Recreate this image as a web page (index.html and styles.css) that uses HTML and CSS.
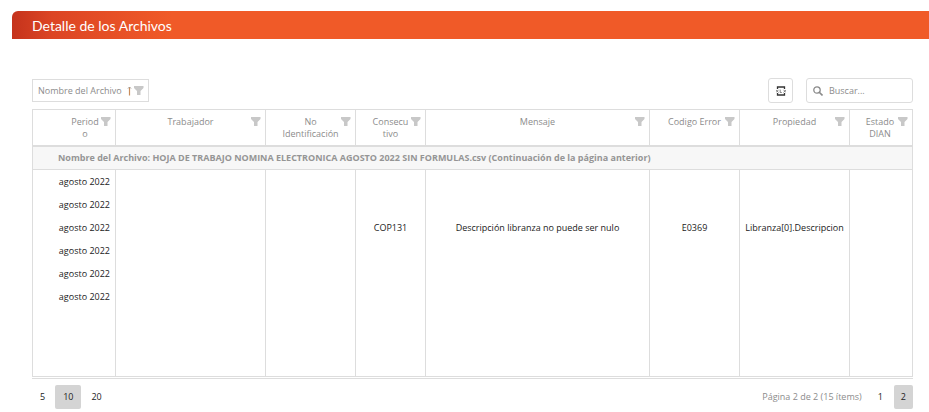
FILE: index.html
```html
<!DOCTYPE html>
<html lang="es">
<head>
    <meta charset="UTF-8">
    <meta name="viewport" content="width=device-width, initial-scale=1.0">
    <title>Detalle de los Archivos</title>
    <link rel="stylesheet" href="styles.css">
</head>
<body>
    <svg class="sprite" aria-hidden="true">
        <symbol id="filter" viewBox="0 0 10 10">
            <path d="M0 0h9.500v2L6.500 5v4H3V5L0 2z" fill="#c8c8c8"/>
        </symbol>
    </svg>
    <section class="panel">
        <h1 class="panel-title">Detalle de los Archivos</h1>
        <div class="grid">
            <div class="toolbar">
                <button class="group-chip" type="button">
                    Nombre del Archivo
                    <svg class="sort" viewBox="0 0 6 10"><path d="M3.5 9.500V1" fill="none" stroke="#c98d5c" stroke-width="1.200"/><path d="M2 2.500L3.500 1L5 2.500" fill="none" stroke="#a09a94"/></svg>
                    <svg class="filter"><use href="#filter"/></svg>
                </button>
                <button class="export" type="button" aria-label="Exportar">
                    <svg viewBox="0 0 10 10">
                        <path d="M1.500 3V1h7v2M1.500 7v2h7V7" fill="none" stroke="#333" stroke-width="1.300"/>
                        <path d="M0 3.800l2.500 2.700M2.500 3.800l-2.500 2.700M4.200 3.600v2.900h1.600M10 3.800l-2.500 2.700M7.500 3.800l2.500 2.700" fill="none" stroke="#777" stroke-width="0.900"/>
                    </svg>
                </button>
                <label class="search">
                    <svg viewBox="0 0 10 10"><circle cx="4" cy="4" r="3.200" fill="none" stroke="#8a8a8a" stroke-width="1.300"/><path d="M6.500 6.500L9.500 9.500" stroke="#8a8a8a" stroke-width="1.600"/></svg>
                    <input type="text" placeholder="Buscar..." aria-label="Buscar">
                </label>
            </div>
            <table class="data">
                <colgroup>
                    <col class="c-periodo">
                    <col class="c-trabajador">
                    <col class="c-medium">
                    <col class="c-consecutivo">
                    <col>
                    <col class="c-medium">
                    <col class="c-propiedad">
                    <col class="c-estado">
                </colgroup>
                <thead>
                    <tr>
                        <th class="right"><div class="head"><span>Periodo</span><svg class="filter"><use href="#filter"/></svg></div></th>
                        <th><div class="head"><span>Trabajador</span><svg class="filter"><use href="#filter"/></svg></div></th>
                        <th><div class="head"><span>No Identificación</span><svg class="filter"><use href="#filter"/></svg></div></th>
                        <th><div class="head"><span>Consecutivo</span><svg class="filter"><use href="#filter"/></svg></div></th>
                        <th><div class="head"><span>Mensaje</span><svg class="filter"><use href="#filter"/></svg></div></th>
                        <th><div class="head"><span>Codigo Error</span><svg class="filter"><use href="#filter"/></svg></div></th>
                        <th><div class="head"><span>Propiedad</span><svg class="filter"><use href="#filter"/></svg></div></th>
                        <th><div class="head"><span>Estado DIAN</span><svg class="filter"><use href="#filter"/></svg></div></th>
                    </tr>
                </thead>
                <tbody>
                    <tr class="group"><td colspan="8">Nombre del Archivo: HOJA DE TRABAJO NOMINA ELECTRONICA AGOSTO 2022 SIN FORMULAS.csv (Continuación de la página anterior)</td></tr>
                    <tr><td class="right">agosto 2022</td><td></td><td></td><td></td><td></td><td></td><td></td><td></td></tr>
                    <tr><td class="right">agosto 2022</td><td></td><td></td><td></td><td></td><td></td><td></td><td></td></tr>
                    <tr><td class="right">agosto 2022</td><td></td><td></td><td>COP131</td><td>Descripción libranza no puede ser nulo</td><td>E0369</td><td>Libranza[0].Descripcion</td><td></td></tr>
                    <tr><td class="right">agosto 2022</td><td></td><td></td><td></td><td></td><td></td><td></td><td></td></tr>
                    <tr><td class="right">agosto 2022</td><td></td><td></td><td></td><td></td><td></td><td></td><td></td></tr>
                    <tr><td class="right">agosto 2022</td><td></td><td></td><td></td><td></td><td></td><td></td><td></td></tr>
                    <tr class="free-space"><td></td><td></td><td></td><td></td><td></td><td></td><td></td><td></td></tr>
                </tbody>
            </table>
            <div class="pager">
                <div class="sizes">
                    <button type="button">5</button>
                    <button type="button" class="selected">10</button>
                    <button type="button">20</button>
                </div>
                <div class="pages">
                    <span class="info">Página 2 de 2 (15 ítems)</span>
                    <button type="button">1</button>
                    <button type="button" class="selected">2</button>
                </div>
            </div>
        </div>
    </section>
</body>
</html>
```
FILE: styles.css
```css
* {
    box-sizing: border-box;
}
body {
    margin: 0;
    background-color: #fff;
    color: #222;
    font-family: "Segoe UI", "Open Sans", sans-serif;
    font-size: 9px;
    line-height: 12px;
}
button, input {
    font: inherit;
    color: inherit;
}
.sprite {
    display: none;
}
.panel {
    padding: 11px 0 0 12px;
}
.panel-title {
    margin: 0;
    padding: 2px 20px 0;
    font-family: Lato, sans-serif;
    font-size: 14px;
    font-weight: 400;
    line-height: 26px;
    color: #fff;
    background: linear-gradient(to right, #c5331c, #dc4524 40px, #f05a28 160px);
    border-radius: 6px 0 0 0;
}
.grid {
    padding: 39px 16px 0 20px;
}
.toolbar {
    display: flex;
    align-items: center;
    margin-bottom: 6px;
}
.group-chip {
    display: flex;
    align-items: center;
    height: 23px;
    padding: 0 4px 0 5px;
    margin-right: auto;
    color: #8c8c8c;
    background: #fff;
    border: 1px solid #ddd;
}
.sort {
    width: 6px;
    height: 10px;
    margin: 0 2px 0 4px;
}
.filter {
    flex: none;
    width: 10px;
    height: 10px;
}
.export {
    display: flex;
    align-items: center;
    justify-content: center;
    width: 25px;
    height: 25px;
    padding: 0;
    margin-right: 13px;
    background: #fff;
    border: 1px solid #ddd;
    border-radius: 3px;
}
.export svg {
    width: 10px;
    height: 10px;
}
.search {
    display: flex;
    align-items: center;
    gap: 6px;
    width: 107px;
    height: 25px;
    padding: 0 6px;
    border: 1px solid #ddd;
    border-radius: 3px;
}
.search svg {
    flex: none;
    width: 10px;
    height: 10px;
}
.search input {
    width: 100%;
    min-width: 0;
    padding: 0;
    border: 0;
    outline: 0;
}
.search input::placeholder {
    color: #8c8c8c;
}

/* Tabla */
.data {
    width: 100%;
    table-layout: fixed;
    border-spacing: 0;
    border: 1px solid #ddd;
}
.c-periodo { width: 83px; }
.c-trabajador { width: 150px; }
.c-medium { width: 90px; }
.c-consecutivo { width: 70px; }
.c-propiedad { width: 110px; }
.c-estado { width: 62px; }
.data th {
    height: 37px;
    padding: 6px 4px 5px;
    font-weight: 400;
    color: #8c8c8c;
    vertical-align: top;
    border-right: 1px solid #ddd;
    border-bottom: 2px solid #ddd;
}
.head {
    display: flex;
    gap: 2px;
    padding-left: 12px;
}
.head span {
    flex: 1;
    min-width: 0;
    overflow-wrap: anywhere;
}
.head .filter {
    margin-top: 1px;
}
.right .head {
    padding-left: 34px;
}
.data td {
    height: 23px;
    padding: 0 5px;
    text-align: center;
    white-space: nowrap;
    border-right: 1px solid #ddd;
}
.data th:last-child, .data td:last-child {
    border-right: 0;
}
.data th:last-child {
    padding: 6px 4px 5px 2px;
}
.data td.right {
    text-align: right;
}
.data .group td {
    padding-left: 25px;
    text-align: left;
    font-weight: 700;
    color: #959595;
    background-color: #f7f7f7;
    border-bottom: 1px solid #ddd;
}
.data .free-space td {
    height: 68px;
}

/* Paginador */
.pager {
    display: flex;
    justify-content: space-between;
    margin-top: 1px;
    padding-top: 6px;
    border-top: 1px solid #ddd;
}
.sizes, .pages {
    display: flex;
    align-items: center;
}
.sizes {
    gap: 2px;
}
.pages {
    gap: 4px;
}
.info {
    margin-right: 5px;
    color: #8c8c8c;
}
.pager button {
    height: 24px;
    padding: 0 7px;
    background: none;
    border: 0;
    border-radius: 2px;
}
.pager .sizes button {
    padding: 0 8px;
}
.pager .selected {
    background-color: #d4d4d4;
}
```
